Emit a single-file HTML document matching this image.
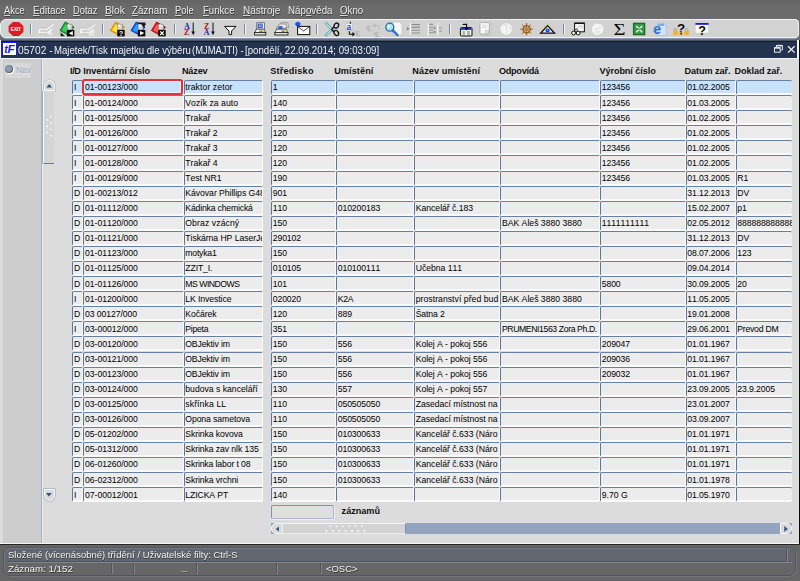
<!DOCTYPE html><html><head><meta charset="utf-8"><title>05702</title><style>
html,body{margin:0;padding:0;}
body{width:800px;height:581px;overflow:hidden;position:relative;background:#6a6a6a;font-family:"Liberation Sans",sans-serif;font-kerning:none;font-variant-ligatures:none;}
.a{position:absolute;}
.menu{left:0;top:0;width:800px;height:40px;background:linear-gradient(#646464,#6b6b6b 8px,#6b6b6b);}
.menu span{position:absolute;top:4.7px;line-height:11px;font-size:10px;color:#ececec;white-space:nowrap;text-shadow:0.5px 0.7px 0.6px #333;}
.menu u{text-decoration:underline;text-decoration-thickness:0.9px;text-underline-offset:1px;text-decoration-color:#d8d8d8;}
.tb{left:0.2px;top:18.7px;width:798.4px;height:19.8px;background:#d2d2d2;border-radius:6.5px 4.6px 4.6px 6.5px;box-shadow:inset 0 0 0 1px #f1f1f1, 0 1.4px 0 #8494ac;}
.sep{position:absolute;top:24px;width:1px;height:10px;background:#7487aa;box-shadow:1px 0 0 #f4f4f4;margin-left:-0.4px;}
.title{left:1.2px;top:40.6px;width:796.2px;height:17px;background:#22324f;box-shadow:0 -1.2px 0 #465466, inset 0 1px 0 #141c2a;}
.title .t{position:absolute;left:17.9px;top:4.5px;line-height:11px;font-size:10.8px;color:#eef0f4;white-space:nowrap;}
.logo{position:absolute;left:0.7px;top:1.4px;width:12.7px;height:12.3px;background:#fbfbff;border:1.2px solid #1c1ce8;}
.main{left:0;top:57.5px;width:798.5px;height:486.7px;background:#dcdcdc;}
.left{left:2.5px;top:59px;width:38.5px;height:483.5px;background:#cdcdcd;border-right:1px solid #a3b3cd;box-shadow:1px 0 0 #ececec;}
.f{position:absolute;box-sizing:border-box;border-radius:1.8px;height:15.08px;background:#ececec;border-style:solid;border-width:1px 1.9px 2px 1.1px;border-color:#66819f #fafafa #fafafa #5a769e;font-size:8.66px;line-height:12.8px;padding-left:0.7px;padding-top:0.45px;white-space:nowrap;overflow:hidden;color:#000;}
.f.s{background:#c9e2fb;}
.h{position:absolute;top:65.6px;font-size:9.1px;font-weight:bold;color:#101010;white-space:nowrap;line-height:10px;}

.nav{left:5.3px;top:63px;width:25.8px;height:14.6px;background:#d8d8d8;}
.nav i{position:absolute;left:-0.2px;top:2.3px;width:7.8px;height:7.8px;border-radius:50%;background:radial-gradient(circle at 45% 45%,#8fa0b8 0,#8a9ab2 45%,#5a6472 62%,#555 70%);box-shadow:0.8px 0.8px 0 0.4px #fafafa;}
.nav b{position:absolute;left:10.6px;top:2.3px;font-weight:normal;font-size:8.6px;line-height:10px;color:#93a8c6;text-shadow:0.6px 0.6px 0 #ececec;}
.vup{left:43.8px;top:79.6px;width:10.9px;height:11px;box-sizing:border-box;background:#d9d9d9;border:1px solid #fafafa;border-radius:5.3px 5.3px 0 0;box-shadow:0 0 0 0.6px #aab4c6;}
.vdn{left:43.5px;top:489.4px;width:11.2px;height:12px;box-sizing:border-box;background:#d9d9d9;border:1px solid #fafafa;border-radius:0 0 5.6px 5.6px;box-shadow:0 0 0 0.7px #a4aec0;}
.vth{left:43.2px;top:91.4px;width:10.8px;height:72.6px;box-sizing:border-box;background:#d5d5d5;border-left:1.2px solid #f6f6f6;border-bottom:1px solid #5f7ba6;box-shadow:-0.8px 0 0 #8fa3c2;}
.hsb{left:271px;top:523.2px;width:521px;height:11.2px;background:#94a4bf;}
.hl{left:271px;top:523.2px;width:11.8px;height:11.2px;box-sizing:border-box;background:#dadada;border:1px solid #f4f4f4;border-radius:5px 0 0 5px;}
.hr{left:779.8px;top:523.2px;width:12px;height:11.2px;box-sizing:border-box;background:#dadada;border:1px solid #f4f4f4;border-radius:0 5px 5px 0;}
.hth{left:282.8px;top:523.2px;width:123.6px;height:11.2px;box-sizing:border-box;background:#d3d3d3;border-top:1.2px solid #f4f4f4;border-bottom:0.8px solid #ececec;border-right:1px solid #7f92b2;}
.cnt{left:271px;top:505px;width:63px;height:14.4px;background:#dfdfdf;border-width:1px;border-color:#7e94b6 #a9b8d0 #a9b8d0 #7e94b6;border-radius:2px;box-shadow:0.8px 0.8px 0 #f4f4f4;}
.zl{left:341.6px;top:506.4px;font-size:9.1px;font-weight:bold;line-height:10px;color:#101010;}
.st{position:absolute;left:8px;font-size:9.7px;color:#f2f2f2;white-space:nowrap;line-height:11px;text-shadow:0.5px 0.6px 0.5px #333;}
.so{left:2.5px;top:546.6px;width:793.5px;height:29.6px;box-sizing:border-box;border:1px solid #4e5666;border-radius:7px;box-shadow:inset 0.7px 0.7px 0 #7c8088, 0.6px 0.6px 0 #80848c;}
.sl{position:absolute;background:#4b5568;box-shadow:0.8px 0.8px 0 #8a8d92;}
.status{left:0;top:544px;width:800px;height:37px;background:#666666;}
</style></head><body>
<div class="a menu"><span style="left:3.90px;font-size:10.00px;transform:scaleX(0.9332);transform-origin:0 0;"><u>A</u>kce</span><span style="left:32.50px;font-size:10.00px;transform:scaleX(0.9830);transform-origin:0 0;"><u>E</u>ditace</span><span style="left:73.25px;font-size:10.00px;transform:scaleX(0.9379);transform-origin:0 0;"><u>D</u>otaz</span><span style="left:104.50px;font-size:10.00px;transform:scaleX(1.0186);transform-origin:0 0;"><u>B</u>lok</span><span style="left:132.00px;font-size:10.00px;transform:scaleX(0.9767);transform-origin:0 0;"><u>Z</u>áznam</span><span style="left:175.25px;font-size:10.00px;transform:scaleX(0.9368);transform-origin:0 0;"><u>P</u>ole</span><span style="left:203.25px;font-size:10.00px;transform:scaleX(0.9611);transform-origin:0 0;"><u>F</u>unkce</span><span style="left:242.50px;font-size:10.00px;transform:scaleX(1.0017);transform-origin:0 0;"><u>N</u>ástroje</span><span style="left:287.50px;font-size:10.00px;transform:scaleX(0.9768);transform-origin:0 0;">Náp<u>o</u>věda</span><span style="left:340.00px;font-size:10.00px;transform:scaleX(0.9740);transform-origin:0 0;"><u>O</u>kno</span></div>
<div class="a tb"></div>
<div class="sep" style="left:30.5px"></div>
<div class="sep" style="left:102px"></div>
<div class="sep" style="left:174px"></div>
<div class="sep" style="left:244.5px"></div>
<div class="sep" style="left:316px"></div>
<div class="sep" style="left:449px"></div>
<div class="sep" style="left:563px"></div>
<svg class="a" style="left:0;top:0" width="800" height="60" viewBox="0 0 800 60" font-family="Liberation Sans, sans-serif"><polygon points="23.39,31.88 19.06,36.02 12.94,36.02 8.61,31.88 8.61,26.02 12.94,21.88 19.06,21.88 23.39,26.02" fill="#dc1b25"/><text x="10.8" y="31" font-size="5.7" font-weight="bold" fill="#fff" textLength="10.4" lengthAdjust="spacingAndGlyphs">EXIT</text><g fill="none" stroke="#f8f8f8" stroke-width="1.6"><path d="M39.5 29 L47.0 29 L52.5 25 L53.5 24.6 M39.5 29 L39.5 33 L48.0 33 L52.0 29.4"/></g><g fill="none" stroke="#b8bcc2" stroke-width="0.8"><path d="M39.5 28 L46.6 28.2 L52.5 24 M39.6 33.8 L47.4 33.8"/></g><path d="M50.5 31 L50.5 36 M48.0 33.5 L53.0 33.5" stroke="#f4f4f4" stroke-width="1.2"/><path d="M51.3 31 L51.3 36" stroke="#c4c8cc" stroke-width="0.5"/><polygon points="65.2,22 74.0,27 68.2,35 60.0,30.5" fill="#1fa53c" stroke="#0c6a22" stroke-width="0.9" stroke-linejoin="round"/><polygon points="65.4,24.2 69.2,27 66.0,32.6 61.8,30.2" fill="#38d058"/><rect x="67.2" y="24.2" width="4.8" height="5.8" fill="#d8d8d8" stroke="#8c8c8c" stroke-width="0.6"/><rect x="67.8" y="24.6" width="2" height="2" fill="#f8f8f8"/><rect x="66.9" y="29.9" width="7.4" height="6.5" fill="#0a0a0a"/><path d="M72.8 31 L72.8 35.4 L68.8 33.2 Z" fill="#fff"/><path d="M60.6 36.2 L60.6 32.2 L65 36.2 Z" fill="#222"/><g fill="none" stroke="#f8f8f8" stroke-width="1.6"><path d="M81.0 29 L88.5 29 L94.0 25 L95.0 24.6 M81.0 29 L81.0 33 L89.5 33 L93.5 29.4"/></g><g fill="none" stroke="#b8bcc2" stroke-width="0.8"><path d="M81.0 28 L88.1 28.2 L94.0 24 M81.1 33.8 L88.9 33.8"/></g><path d="M89.5 31 L94.5 36 M94.5 31 L89.5 36" stroke="#f4f4f4" stroke-width="1.2"/><path d="M90.1 31.6 L95.1 36.4" stroke="#c4c8cc" stroke-width="0.5"/><polygon points="115.6,22 124.4,27 118.6,35 110.4,30.5" fill="#f4a810" stroke="#c88408" stroke-width="0.9" stroke-linejoin="round"/><polygon points="115.8,24.2 119.6,27 116.4,32.6 112.2,30.2" fill="#ffe628"/><rect x="117.6" y="24.2" width="4.8" height="5.8" fill="#d8d8d8" stroke="#8c8c8c" stroke-width="0.6"/><rect x="118.2" y="24.6" width="2" height="2" fill="#f8f8f8"/><rect x="117.3" y="29.9" width="7.4" height="6.5" fill="#0a0a0a"/><text x="119.0" y="36" font-size="6.8" font-weight="bold" fill="#fff">?</text><polygon points="136.2,22 145.0,27 139.2,35 131.0,30.5" fill="#1560e6" stroke="#0a30b0" stroke-width="0.9" stroke-linejoin="round"/><polygon points="136.4,24.2 140.2,27 137.0,32.6 132.8,30.2" fill="#28a0ff"/><rect x="138.2" y="24.2" width="4.8" height="5.8" fill="#d8d8d8" stroke="#8c8c8c" stroke-width="0.6"/><rect x="138.8" y="24.6" width="2" height="2" fill="#f8f8f8"/><rect x="137.9" y="29.9" width="7.4" height="6.5" fill="#0a0a0a"/><path d="M140.0 30.9 L140.0 35.3 L144.4 33.1 Z" fill="#fff"/><path d="M138 22.4 H145.4 V24 H138 Z M141.2 24 L146 24 L143.6 27.6 Z" fill="#181818"/><polygon points="156.6,22 165.4,27 159.6,35 151.4,30.5" fill="#dc1c24" stroke="#980c12" stroke-width="0.9" stroke-linejoin="round"/><polygon points="156.8,24.2 160.6,27 157.4,32.6 153.2,30.2" fill="#ff5a50"/><rect x="158.6" y="24.2" width="4.8" height="5.8" fill="#d8d8d8" stroke="#8c8c8c" stroke-width="0.6"/><rect x="159.2" y="24.6" width="2" height="2" fill="#f8f8f8"/><rect x="158.3" y="29.9" width="7.4" height="6.5" fill="#0a0a0a"/><path d="M160.2 31.4 L163.8 35 M163.8 31.4 L160.2 35" stroke="#fff" stroke-width="1.2"/><text x="184.3" y="28.6" font-family="Liberation Serif, serif" font-weight="bold" font-size="7.8" fill="#1c1ca0">A</text><text x="184.0" y="34.8" font-family="Liberation Serif, serif" font-weight="bold" font-size="7.8" fill="#a01020">Z</text><path d="M193.2 22.6 L193.2 32" stroke="#111" stroke-width="1"/><path d="M191.4 31.4 L195.0 31.4 L193.2 35.2 Z" fill="#111"/><text x="204.1" y="28.6" font-family="Liberation Serif, serif" font-weight="bold" font-size="7.8" fill="#a01020">Z</text><text x="203.8" y="34.8" font-family="Liberation Serif, serif" font-weight="bold" font-size="7.8" fill="#1c1ca0">A</text><path d="M213.0 22.6 L213.0 32" stroke="#111" stroke-width="1"/><path d="M211.2 31.4 L214.8 31.4 L213.0 35.2 Z" fill="#111"/><path d="M224.6 26.4 L236 26.4 L231.6 31 L231.6 34.6 L229 34.6 L229 31 Z" fill="#fafafa" stroke="#111" stroke-width="1"/><rect x="256.8" y="22.8" width="7.6" height="6.4" fill="#f4f4f8" stroke="#333" stroke-width="0.6"/><rect x="257.6" y="23.6" width="5.2" height="4.6" fill="#3c5cc8"/><path d="M258.8 25 h3 M258.8 26.6 h3" stroke="#dfe6ff" stroke-width="0.6"/><path d="M254.8 33 L256.2 29.2 L264.2 29.2 L265.6 33 Z" fill="#f2f2f2" stroke="#222" stroke-width="0.7"/><rect x="254.6" y="32.4" width="11.2" height="2.6" fill="#e0e0e0" stroke="#111" stroke-width="0.8"/><rect x="259.2" y="30.6" width="1.6" height="1.2" fill="#20a030"/><rect x="260.8" y="30.6" width="1.6" height="1.2" fill="#e02020"/><rect x="262.4" y="30.6" width="1.6" height="1.2" fill="#e8c020"/><path d="M277.4 27.6 L281.4 22.6 L287.8 22.6 L288.8 27.6 Z" fill="#d8d8d8" stroke="#777" stroke-width="0.6"/><path d="M276.4 28 L279.4 24 L285.8 24 L286.8 28 Z" fill="#ececec" stroke="#666" stroke-width="0.6"/><rect x="278.4" y="26" width="4" height="3" fill="#4466cc"/><path d="M275.0 33 L276.4 29.2 L286.4 29.2 L287.8 33 Z" fill="#f2f2f2" stroke="#222" stroke-width="0.7"/><rect x="274.8" y="32.4" width="13.2" height="2.6" fill="#e0e0e0" stroke="#111" stroke-width="0.8"/><rect x="281.4" y="30.6" width="1.6" height="1.2" fill="#20a030"/><rect x="283.0" y="30.6" width="1.6" height="1.2" fill="#e02020"/><rect x="284.6" y="30.6" width="1.6" height="1.2" fill="#e8c020"/><rect x="297.6" y="26.4" width="12.2" height="8.2" fill="#fbfbfb" stroke="#111" stroke-width="1"/><path d="M297.8 26.6 L303.7 31 L309.6 26.6" fill="none" stroke="#111" stroke-width="0.8"/><path d="M295 24 L300.6 24 M297.8 21.8 L297.8 26.4 M296 22.4 L299.6 25.8 M299.6 22.4 L296 25.8" stroke="#1a50e0" stroke-width="1.3"/><path d="M325.2 22.4 L332.8 30.2 M325.2 35.8 L332.8 28.6" stroke="#3e8e96" stroke-width="2.4" fill="none"/><path d="M325.4 22.6 L332.6 30 M325.4 35.6 L332.6 28.8" stroke="#c8f0f0" stroke-width="1.2" fill="none"/><path d="M331.4 29.4 L334.2 26.8 M331.4 29.4 L334.2 32" stroke="#111" stroke-width="1.4"/><ellipse cx="336.3" cy="25.6" rx="2.1" ry="2.7" fill="none" stroke="#111" stroke-width="1.3" transform="rotate(35 336.3 25.6)"/><ellipse cx="336.3" cy="33" rx="2.1" ry="2.7" fill="none" stroke="#111" stroke-width="1.3" transform="rotate(-35 336.3 33)"/><rect x="346" y="23.8" width="6" height="7" fill="#fafaff" stroke="#b4b4c4" stroke-width="0.6"/><text x="346.5" y="30.2" font-size="8.2" font-weight="bold" fill="#2030e0">a</text><path d="M350.4 21.8 L350.4 23.6 M349.4 31.2 L349.4 34.2 L353 34.2" stroke="#111" stroke-width="1.1" fill="none"/><path d="M352.4 32 L355.4 34.2 L352.4 36.4 Z" fill="#111"/><text x="354.4" y="36.4" font-size="9.2" font-weight="bold" fill="#fcfcfc" stroke="#a0a0a0" stroke-width="0.5">a</text><text x="365.8" y="30.8" font-size="9.6" font-weight="bold" fill="#fcfcfc" stroke="#a4a4a4" stroke-width="0.5">a</text><text x="373.8" y="36.6" font-size="9.6" font-weight="bold" fill="#fcfcfc" stroke="#a4a4a4" stroke-width="0.5">a</text><path d="M373.6 25.4 L378.8 25.4 L378.8 29.6" stroke="#bcbcbc" stroke-width="1" fill="none"/><path d="M375.4 23.2 L372.2 25.4 L375.4 27.6 Z" fill="#b8b8b8"/><path d="M393 22 H399.6 L402 24.4 V35 H393 Z" fill="#f6f6f6" stroke="#b8b8b8" stroke-width="0.6"/><circle cx="389.8" cy="27.2" r="4" fill="#a8e4f4" stroke="#2a6c94" stroke-width="1.3"/><circle cx="388.8" cy="26.2" r="1.5" fill="#eafaff"/><path d="M392.8 30.4 L397.4 35" stroke="#1458c8" stroke-width="2.4" stroke-linecap="round"/><path d="M393.2 30.6 L397.4 34.8" stroke="#58a8f0" stroke-width="0.8" stroke-linecap="round"/><g stroke="#909090" stroke-width="1.1"><path d="M411.6 24.6 H420 M411.6 27.4 H420 M411.6 30.2 H420 M411.6 33 H420"/></g><path d="M410.4 23 V35" stroke="#f6f6f6" stroke-width="1.2"/><path d="M406.8 27 L409.8 28.8 L406.8 30.6 Z" fill="#888"/><g stroke="#949494" stroke-width="1.1"><path d="M429 24.4 H433 M429 27.2 H433 M429 30 H433 M429 32.8 H433 M439 28 H442 M439 31 H442"/></g><path d="M428.2 23 V35.4 M437.8 23 V35.4" stroke="#f6f6f6" stroke-width="1.2"/><path d="M433.6 26.4 L436.4 28 L433.6 29.6 Z M433.6 30.4 L436.4 32 L433.6 33.6 Z" fill="#8c8c8c"/><rect x="460.4" y="27.6" width="11.6" height="8.4" rx="1" fill="#f2f2f2" stroke="#111" stroke-width="1"/><rect x="461" y="28" width="10.4" height="2" fill="#2040d8"/><path d="M462.4 32 h2.6 M462.4 34 h2.6 M467 32 h3 M467 34 h3" stroke="#555" stroke-width="0.8"/><path d="M460 23.4 H465" stroke="#f0e8c0" stroke-width="1.6"/><path d="M458.6 22 H469" stroke="#a8d0f0" stroke-width="0.7"/><path d="M462.6 24.4 H466.6 V28" stroke="#111" stroke-width="1.1" fill="none"/><path d="M464.4 27.4 L468.8 27.4 L466.6 30.6 Z" fill="#111"/><rect x="481.6" y="23.8" width="9.6" height="11.4" fill="#d4d4d4" stroke="#bcbcbc" stroke-width="0.5"/><rect x="480" y="22.6" width="9.4" height="11.4" rx="0.8" fill="#f8f8f8" stroke="#9c9c9c" stroke-width="0.7"/><path d="M482 25.4 h5.4 M482 27.4 h5.4" stroke="#cfcfcf" stroke-width="0.7"/><rect x="485.4" y="30.6" width="3.4" height="3" fill="#e0e0e0" stroke="#b0b0b0" stroke-width="0.5"/><circle cx="506.2" cy="29" r="6.2" fill="#f4f4f4" stroke="#c4c4c4" stroke-width="0.6"/><path d="M503 25.6 q2 -1.4 4 -0.4 q0.6 1.6 -1 2.4 q-0.4 1.8 1.4 3 q-0.4 2 -1.8 3 M509 26.6 q1.6 1.2 1.4 3.4" fill="none" stroke="#cfcfcf" stroke-width="0.8"/><g stroke="#a25a14" fill="none"><circle cx="526.6" cy="29.2" r="3.6" stroke-width="1.3"/><path d="M520.4 29.2 H532.8 M526.6 23 V35.4 M522.2 24.8 L531 33.6 M531 24.8 L522.2 33.6" stroke-width="1"/></g><circle cx="526.6" cy="29.2" r="1.3" fill="#c88a3a"/><path d="M541.4 28.4 L543 29.4 M544 25.2 L545.2 26.6 M547.6 23.6 L547.6 25.2 M551 25.2 L549.8 26.6 M553.8 28.4 L552.2 29.4" stroke="#f0d020" stroke-width="1"/><path d="M540.6 33.2 L547.6 25.6 L554.6 33.2 Z" fill="#e8e8e8" stroke="#111" stroke-width="1.3" stroke-linejoin="miter"/><circle cx="547.6" cy="30.4" r="2" fill="#1040f0"/><circle cx="547.6" cy="30.2" r="0.8" fill="#30c8ff"/><rect x="574.6" y="23" width="9.8" height="8.8" fill="#f4f4f4" stroke="#111" stroke-width="1"/><path d="M575 23.4 h9" stroke="#111" stroke-width="1.2"/><path d="M577 29 L579.6 25.6 L581 27.6 L583.4 24.8" stroke="#b8b8b8" stroke-width="0.7" fill="none"/><circle cx="573.6" cy="33" r="1.9" fill="#f8f8f8" stroke="#111" stroke-width="1"/><circle cx="578.2" cy="33" r="1.9" fill="#f8f8f8" stroke="#111" stroke-width="1"/><path d="M574.4 30.8 L576.6 28.6 M577.4 30.8 L576.8 28.8" stroke="#111" stroke-width="0.9"/><circle cx="597.6" cy="29.2" r="6.2" fill="#f4f4f4" stroke="#c8c8c8" stroke-width="0.6"/><path d="M594.6 29 L597.6 29.6 L600.6 26.6" stroke="#d0d0d0" stroke-width="0.8" fill="none"/><path d="M595 32 h5" stroke="#d4d4d4" stroke-width="0.8"/><text x="613.4" y="35.4" font-family="Liberation Serif, serif" font-size="16" fill="#0a0a0a" textLength="12" lengthAdjust="spacingAndGlyphs">Σ</text><rect x="633.6" y="23.4" width="11" height="11.2" fill="#3c9a4c" stroke="#176f27" stroke-width="1.4"/><path d="M636.2 26 L642.2 32.2 M642.2 26 L636.2 32.2" stroke="#dff2df" stroke-width="1.5"/><path d="M636.4 29.1 h5.6" stroke="#1a7a2a" stroke-width="0.9"/><path d="M657.6 23.4 H664 L666.4 25.8 V35.8 H657.6 Z" fill="#d4e2f8" stroke="#9ab0d8" stroke-width="0.6"/><rect x="658" y="23.8" width="6" height="2.2" fill="#8cb8f0"/><text x="653.2" y="34.4" font-size="14" font-weight="bold" fill="#1f6ad8">e</text><path d="M653.6 31.4 q3.6 -7.6 10.6 -6.4" stroke="#5aa4f4" stroke-width="1" fill="none"/><text x="677" y="32.8" font-size="13.4" font-weight="bold" fill="#0a0a0a">?</text><rect x="673.2" y="30.6" width="4.4" height="4.6" fill="#f0b030"/><rect x="684.4" y="30.6" width="4.4" height="4.6" fill="#f0b030"/><rect x="678.6" y="32" width="4.8" height="3.4" fill="#e8c060"/><path d="M674.2 30.6 v-1.4 q1.2 -1.4 2.4 0 v1.4 M685.4 30.6 v-1.4 q1.2 -1.4 2.4 0 v1.4" stroke="#888" stroke-width="0.7" fill="none"/><rect x="680.4" y="32.6" width="1.4" height="1.8" fill="#111"/><rect x="695.4" y="23.4" width="13.2" height="9.6" fill="#fafafa" stroke="#c8c8c8" stroke-width="0.5"/><rect x="695.4" y="23" width="13.2" height="1.8" fill="#1818e0"/><text x="698.2" y="35.4" font-size="12.6" font-weight="bold" fill="#0a0a0a">?</text></svg>
<div class="a" style="left:0;top:39.6px;width:800px;height:505.8px;background:#0c0c0c"></div><div class="a" style="left:0;top:40px;width:798.9px;height:505px;background:#f2f2f2"></div>
<div class="a title"><div class="logo"><svg width="13" height="13" viewBox="0 0 13 13" style="position:absolute;left:0;top:0"><text x="1.2" y="10" font-family="Liberation Sans, sans-serif" font-style="italic" font-weight="bold" font-size="10.5" fill="#1a1ae0">t</text><text x="4.4" y="10.4" font-family="Liberation Sans, sans-serif" font-style="italic" font-weight="bold" font-size="11.5" fill="#1a1ae0">F</text></svg></div><div class="t" style="left:16.95px;font-size:10.80px;transform:scaleX(0.9437);transform-origin:0 0;">05702 -</div><div class="t" style="left:52.60px;font-size:10.80px;transform:scaleX(0.8879);transform-origin:0 0;">Majetek/Tisk majetku dle výběru</div><div class="t" style="left:191.30px;font-size:10.80px;transform:scaleX(0.8698);transform-origin:0 0;">(MJMAJTI) -</div><div class="t" style="left:244.20px;font-size:10.80px;transform:scaleX(0.8973);transform-origin:0 0;">[pondělí, 22.09.2014; 09:03:09]</div></div>
<div class="a main"></div><div class="a" style="left:0;top:57.6px;width:798.5px;height:1.4px;background:#f8f8f8"></div><div class="a left"></div>
<div class="h" style="left:70.05px;font-size:9.15px;letter-spacing:-0.434px;">I/D</div>
<div class="h" style="left:83.20px;font-size:9.15px;letter-spacing:-0.003px;">Inventární číslo</div>
<div class="h" style="left:181.95px;font-size:9.15px;letter-spacing:-0.156px;">Název</div>
<div class="h" style="left:270.15px;font-size:9.15px;letter-spacing:0.216px;">Středisko</div>
<div class="h" style="left:334.15px;font-size:9.15px;letter-spacing:0.097px;">Umístění</div>
<div class="h" style="left:412.35px;font-size:9.15px;letter-spacing:0.093px;">Název umístění</div>
<div class="h" style="left:498.95px;font-size:9.15px;letter-spacing:-0.281px;">Odpovídá</div>
<div class="h" style="left:599.45px;font-size:9.15px;letter-spacing:-0.086px;">Výrobní číslo</div>
<div class="h" style="left:684.45px;font-size:9.15px;letter-spacing:-0.062px;">Datum zař.</div>
<div class="h" style="left:734.55px;font-size:9.15px;letter-spacing:-0.099px;">Doklad zař.</div>
<div class="f s" style="left:72.4px;top:80.06px;width:11.0px;font-size:8.66px;letter-spacing:-0.044px;padding-left:0.5px;">I</div>
<div class="f s" style="left:83.4px;top:80.06px;width:100.2px;font-size:8.66px;letter-spacing:-0.059px;">01-00123/000</div>
<div class="f s" style="left:183.6px;top:80.06px;width:79.0px;font-size:8.66px;letter-spacing:0.080px;">traktor zetor</div>
<div class="f s" style="left:271px;top:80.06px;width:65.0px;font-size:8.66px;letter-spacing:-0.093px;">1</div>
<div class="f s" style="left:336px;top:80.06px;width:78.0px;"></div>
<div class="f s" style="left:414px;top:80.06px;width:86.2px;"></div>
<div class="f s" style="left:500.2px;top:80.06px;width:99.8px;"></div>
<div class="f s" style="left:600px;top:80.06px;width:85.6px;font-size:8.66px;letter-spacing:-0.093px;">123456</div>
<div class="f s" style="left:685.6px;top:80.06px;width:50.0px;font-size:8.66px;letter-spacing:-0.083px;">01.02.2005</div>
<div class="f s" style="left:735.6px;top:80.06px;width:56.7px;border-right:none;"></div>
<div class="f" style="left:72.4px;top:95.14px;width:11.0px;font-size:8.66px;letter-spacing:-0.044px;padding-left:0.5px;">I</div>
<div class="f" style="left:83.4px;top:95.14px;width:100.2px;font-size:8.66px;letter-spacing:-0.059px;">01-00124/000</div>
<div class="f" style="left:183.6px;top:95.14px;width:79.0px;font-size:8.66px;letter-spacing:0.021px;">Vozík za auto</div>
<div class="f" style="left:271px;top:95.14px;width:65.0px;font-size:8.66px;letter-spacing:-0.093px;">140</div>
<div class="f" style="left:336px;top:95.14px;width:78.0px;"></div>
<div class="f" style="left:414px;top:95.14px;width:86.2px;"></div>
<div class="f" style="left:500.2px;top:95.14px;width:99.8px;"></div>
<div class="f" style="left:600px;top:95.14px;width:85.6px;font-size:8.66px;letter-spacing:-0.093px;">123456</div>
<div class="f" style="left:685.6px;top:95.14px;width:50.0px;font-size:8.66px;letter-spacing:-0.083px;">01.03.2005</div>
<div class="f" style="left:735.6px;top:95.14px;width:56.7px;border-right:none;"></div>
<div class="f" style="left:72.4px;top:110.22px;width:11.0px;font-size:8.66px;letter-spacing:-0.044px;padding-left:0.5px;">I</div>
<div class="f" style="left:83.4px;top:110.22px;width:100.2px;font-size:8.66px;letter-spacing:-0.059px;">01-00125/000</div>
<div class="f" style="left:183.6px;top:110.22px;width:79.0px;font-size:8.66px;letter-spacing:0.043px;">Trakař</div>
<div class="f" style="left:271px;top:110.22px;width:65.0px;font-size:8.66px;letter-spacing:-0.093px;">120</div>
<div class="f" style="left:336px;top:110.22px;width:78.0px;"></div>
<div class="f" style="left:414px;top:110.22px;width:86.2px;"></div>
<div class="f" style="left:500.2px;top:110.22px;width:99.8px;"></div>
<div class="f" style="left:600px;top:110.22px;width:85.6px;font-size:8.66px;letter-spacing:-0.093px;">123456</div>
<div class="f" style="left:685.6px;top:110.22px;width:50.0px;font-size:8.66px;letter-spacing:-0.083px;">01.02.2005</div>
<div class="f" style="left:735.6px;top:110.22px;width:56.7px;border-right:none;"></div>
<div class="f" style="left:72.4px;top:125.30px;width:11.0px;font-size:8.66px;letter-spacing:-0.044px;padding-left:0.5px;">I</div>
<div class="f" style="left:83.4px;top:125.30px;width:100.2px;font-size:8.66px;letter-spacing:-0.059px;">01-00126/000</div>
<div class="f" style="left:183.6px;top:125.30px;width:79.0px;font-size:8.66px;letter-spacing:0.015px;">Trakař 2</div>
<div class="f" style="left:271px;top:125.30px;width:65.0px;font-size:8.66px;letter-spacing:-0.093px;">120</div>
<div class="f" style="left:336px;top:125.30px;width:78.0px;"></div>
<div class="f" style="left:414px;top:125.30px;width:86.2px;"></div>
<div class="f" style="left:500.2px;top:125.30px;width:99.8px;"></div>
<div class="f" style="left:600px;top:125.30px;width:85.6px;font-size:8.66px;letter-spacing:-0.093px;">123456</div>
<div class="f" style="left:685.6px;top:125.30px;width:50.0px;font-size:8.66px;letter-spacing:-0.083px;">01.02.2005</div>
<div class="f" style="left:735.6px;top:125.30px;width:56.7px;border-right:none;"></div>
<div class="f" style="left:72.4px;top:140.38px;width:11.0px;font-size:8.66px;letter-spacing:-0.044px;padding-left:0.5px;">I</div>
<div class="f" style="left:83.4px;top:140.38px;width:100.2px;font-size:8.66px;letter-spacing:-0.059px;">01-00127/000</div>
<div class="f" style="left:183.6px;top:140.38px;width:79.0px;font-size:8.66px;letter-spacing:0.015px;">Trakař 3</div>
<div class="f" style="left:271px;top:140.38px;width:65.0px;font-size:8.66px;letter-spacing:-0.093px;">120</div>
<div class="f" style="left:336px;top:140.38px;width:78.0px;"></div>
<div class="f" style="left:414px;top:140.38px;width:86.2px;"></div>
<div class="f" style="left:500.2px;top:140.38px;width:99.8px;"></div>
<div class="f" style="left:600px;top:140.38px;width:85.6px;font-size:8.66px;letter-spacing:-0.093px;">123456</div>
<div class="f" style="left:685.6px;top:140.38px;width:50.0px;font-size:8.66px;letter-spacing:-0.083px;">01.02.2005</div>
<div class="f" style="left:735.6px;top:140.38px;width:56.7px;border-right:none;"></div>
<div class="f" style="left:72.4px;top:155.46px;width:11.0px;font-size:8.66px;letter-spacing:-0.044px;padding-left:0.5px;">I</div>
<div class="f" style="left:83.4px;top:155.46px;width:100.2px;font-size:8.66px;letter-spacing:-0.059px;">01-00128/000</div>
<div class="f" style="left:183.6px;top:155.46px;width:79.0px;font-size:8.66px;letter-spacing:0.015px;">Trakař 4</div>
<div class="f" style="left:271px;top:155.46px;width:65.0px;font-size:8.66px;letter-spacing:-0.093px;">120</div>
<div class="f" style="left:336px;top:155.46px;width:78.0px;"></div>
<div class="f" style="left:414px;top:155.46px;width:86.2px;"></div>
<div class="f" style="left:500.2px;top:155.46px;width:99.8px;"></div>
<div class="f" style="left:600px;top:155.46px;width:85.6px;font-size:8.66px;letter-spacing:-0.093px;">123456</div>
<div class="f" style="left:685.6px;top:155.46px;width:50.0px;font-size:8.66px;letter-spacing:-0.083px;">01.02.2005</div>
<div class="f" style="left:735.6px;top:155.46px;width:56.7px;border-right:none;"></div>
<div class="f" style="left:72.4px;top:170.54px;width:11.0px;font-size:8.66px;letter-spacing:-0.044px;padding-left:0.5px;">I</div>
<div class="f" style="left:83.4px;top:170.54px;width:100.2px;font-size:8.66px;letter-spacing:-0.059px;">01-00129/000</div>
<div class="f" style="left:183.6px;top:170.54px;width:79.0px;font-size:8.66px;letter-spacing:-0.035px;">Test NR1</div>
<div class="f" style="left:271px;top:170.54px;width:65.0px;font-size:8.66px;letter-spacing:-0.093px;">190</div>
<div class="f" style="left:336px;top:170.54px;width:78.0px;"></div>
<div class="f" style="left:414px;top:170.54px;width:86.2px;"></div>
<div class="f" style="left:500.2px;top:170.54px;width:99.8px;"></div>
<div class="f" style="left:600px;top:170.54px;width:85.6px;font-size:8.66px;letter-spacing:-0.093px;">123456</div>
<div class="f" style="left:685.6px;top:170.54px;width:50.0px;font-size:8.66px;letter-spacing:-0.083px;">01.03.2005</div>
<div class="f" style="left:735.6px;top:170.54px;width:56.7px;font-size:8.66px;letter-spacing:-0.024px;border-right:none;">R1</div>
<div class="f" style="left:72.4px;top:185.62px;width:11.0px;font-size:8.66px;letter-spacing:0.044px;padding-left:0.5px;">D</div>
<div class="f" style="left:83.4px;top:185.62px;width:100.2px;font-size:8.66px;letter-spacing:-0.059px;">01-00213/012</div>
<div class="f" style="left:183.6px;top:185.62px;width:79.0px;font-size:8.66px;letter-spacing:-0.043px;">Kávovar Phillips G48</div>
<div class="f" style="left:271px;top:185.62px;width:65.0px;font-size:8.66px;letter-spacing:-0.093px;">901</div>
<div class="f" style="left:336px;top:185.62px;width:78.0px;"></div>
<div class="f" style="left:414px;top:185.62px;width:86.2px;"></div>
<div class="f" style="left:500.2px;top:185.62px;width:99.8px;"></div>
<div class="f" style="left:600px;top:185.62px;width:85.6px;"></div>
<div class="f" style="left:685.6px;top:185.62px;width:50.0px;font-size:8.66px;letter-spacing:-0.083px;">31.12.2013</div>
<div class="f" style="left:735.6px;top:185.62px;width:56.7px;font-size:8.66px;letter-spacing:-0.110px;border-right:none;">DV</div>
<div class="f" style="left:72.4px;top:200.70px;width:11.0px;font-size:8.66px;letter-spacing:0.044px;padding-left:0.5px;">D</div>
<div class="f" style="left:83.4px;top:200.70px;width:100.2px;font-size:8.66px;letter-spacing:-0.059px;">01-01112/000</div>
<div class="f" style="left:183.6px;top:200.70px;width:79.0px;font-size:8.66px;letter-spacing:-0.176px;">Kádinka chemická</div>
<div class="f" style="left:271px;top:200.70px;width:65.0px;font-size:8.66px;letter-spacing:-0.093px;">110</div>
<div class="f" style="left:336px;top:200.70px;width:78.0px;font-size:8.66px;letter-spacing:-0.093px;">010200183</div>
<div class="f" style="left:414px;top:200.70px;width:86.2px;font-size:8.66px;letter-spacing:-0.021px;">Kancelář č.183</div>
<div class="f" style="left:500.2px;top:200.70px;width:99.8px;"></div>
<div class="f" style="left:600px;top:200.70px;width:85.6px;"></div>
<div class="f" style="left:685.6px;top:200.70px;width:50.0px;font-size:8.66px;letter-spacing:-0.083px;">15.02.2007</div>
<div class="f" style="left:735.6px;top:200.70px;width:56.7px;font-size:8.66px;letter-spacing:-0.093px;border-right:none;">p1</div>
<div class="f" style="left:72.4px;top:215.78px;width:11.0px;font-size:8.66px;letter-spacing:0.044px;padding-left:0.5px;">D</div>
<div class="f" style="left:83.4px;top:215.78px;width:100.2px;font-size:8.66px;letter-spacing:-0.059px;">01-01120/000</div>
<div class="f" style="left:183.6px;top:215.78px;width:79.0px;font-size:8.66px;letter-spacing:0.089px;">Obraz vzácný</div>
<div class="f" style="left:271px;top:215.78px;width:65.0px;font-size:8.66px;letter-spacing:-0.093px;">150</div>
<div class="f" style="left:336px;top:215.78px;width:78.0px;"></div>
<div class="f" style="left:414px;top:215.78px;width:86.2px;"></div>
<div class="f" style="left:500.2px;top:215.78px;width:99.8px;font-size:8.66px;letter-spacing:0.003px;">BAK Aleš 3880 3880</div>
<div class="f" style="left:600px;top:215.78px;width:85.6px;font-size:8.66px;letter-spacing:-0.093px;">1111111111</div>
<div class="f" style="left:685.6px;top:215.78px;width:50.0px;font-size:8.66px;letter-spacing:-0.083px;">02.05.2012</div>
<div class="f" style="left:735.6px;top:215.78px;width:56.7px;font-size:8.66px;letter-spacing:-0.093px;border-right:none;">888888888888</div>
<div class="f" style="left:72.4px;top:230.86px;width:11.0px;font-size:8.66px;letter-spacing:0.044px;padding-left:0.5px;">D</div>
<div class="f" style="left:83.4px;top:230.86px;width:100.2px;font-size:8.66px;letter-spacing:-0.059px;">01-01121/000</div>
<div class="f" style="left:183.6px;top:230.86px;width:79.0px;font-size:8.66px;letter-spacing:-0.052px;">Tiskárna HP LaserJe</div>
<div class="f" style="left:271px;top:230.86px;width:65.0px;font-size:8.66px;letter-spacing:-0.093px;">290102</div>
<div class="f" style="left:336px;top:230.86px;width:78.0px;"></div>
<div class="f" style="left:414px;top:230.86px;width:86.2px;"></div>
<div class="f" style="left:500.2px;top:230.86px;width:99.8px;"></div>
<div class="f" style="left:600px;top:230.86px;width:85.6px;"></div>
<div class="f" style="left:685.6px;top:230.86px;width:50.0px;font-size:8.66px;letter-spacing:-0.083px;">31.12.2013</div>
<div class="f" style="left:735.6px;top:230.86px;width:56.7px;font-size:8.66px;letter-spacing:-0.110px;border-right:none;">DV</div>
<div class="f" style="left:72.4px;top:245.94px;width:11.0px;font-size:8.66px;letter-spacing:0.044px;padding-left:0.5px;">D</div>
<div class="f" style="left:83.4px;top:245.94px;width:100.2px;font-size:8.66px;letter-spacing:-0.059px;">01-01123/000</div>
<div class="f" style="left:183.6px;top:245.94px;width:79.0px;font-size:8.66px;letter-spacing:-0.209px;">motyka1</div>
<div class="f" style="left:271px;top:245.94px;width:65.0px;font-size:8.66px;letter-spacing:-0.093px;">150</div>
<div class="f" style="left:336px;top:245.94px;width:78.0px;"></div>
<div class="f" style="left:414px;top:245.94px;width:86.2px;"></div>
<div class="f" style="left:500.2px;top:245.94px;width:99.8px;"></div>
<div class="f" style="left:600px;top:245.94px;width:85.6px;"></div>
<div class="f" style="left:685.6px;top:245.94px;width:50.0px;font-size:8.66px;letter-spacing:-0.083px;">08.07.2006</div>
<div class="f" style="left:735.6px;top:245.94px;width:56.7px;font-size:8.66px;letter-spacing:-0.093px;border-right:none;">123</div>
<div class="f" style="left:72.4px;top:261.02px;width:11.0px;font-size:8.66px;letter-spacing:0.044px;padding-left:0.5px;">D</div>
<div class="f" style="left:83.4px;top:261.02px;width:100.2px;font-size:8.66px;letter-spacing:-0.059px;">01-01125/000</div>
<div class="f" style="left:183.6px;top:261.02px;width:79.0px;font-size:8.66px;letter-spacing:-0.109px;">ZZIT_I.</div>
<div class="f" style="left:271px;top:261.02px;width:65.0px;font-size:8.66px;letter-spacing:-0.093px;">010105</div>
<div class="f" style="left:336px;top:261.02px;width:78.0px;font-size:8.66px;letter-spacing:-0.093px;">010100111</div>
<div class="f" style="left:414px;top:261.02px;width:86.2px;font-size:8.66px;letter-spacing:-0.025px;">Učebna 111</div>
<div class="f" style="left:500.2px;top:261.02px;width:99.8px;"></div>
<div class="f" style="left:600px;top:261.02px;width:85.6px;"></div>
<div class="f" style="left:685.6px;top:261.02px;width:50.0px;font-size:8.66px;letter-spacing:-0.083px;">09.04.2014</div>
<div class="f" style="left:735.6px;top:261.02px;width:56.7px;border-right:none;"></div>
<div class="f" style="left:72.4px;top:276.10px;width:11.0px;font-size:8.66px;letter-spacing:0.044px;padding-left:0.5px;">D</div>
<div class="f" style="left:83.4px;top:276.10px;width:100.2px;font-size:8.66px;letter-spacing:-0.059px;">01-01126/000</div>
<div class="f" style="left:183.6px;top:276.10px;width:79.0px;font-size:8.66px;letter-spacing:-0.488px;">MS WINDOWS</div>
<div class="f" style="left:271px;top:276.10px;width:65.0px;font-size:8.66px;letter-spacing:-0.093px;">101</div>
<div class="f" style="left:336px;top:276.10px;width:78.0px;"></div>
<div class="f" style="left:414px;top:276.10px;width:86.2px;"></div>
<div class="f" style="left:500.2px;top:276.10px;width:99.8px;"></div>
<div class="f" style="left:600px;top:276.10px;width:85.6px;font-size:8.66px;letter-spacing:-0.093px;">5800</div>
<div class="f" style="left:685.6px;top:276.10px;width:50.0px;font-size:8.66px;letter-spacing:-0.083px;">30.09.2005</div>
<div class="f" style="left:735.6px;top:276.10px;width:56.7px;font-size:8.66px;letter-spacing:-0.093px;border-right:none;">20</div>
<div class="f" style="left:72.4px;top:291.18px;width:11.0px;font-size:8.66px;letter-spacing:-0.044px;padding-left:0.5px;">I</div>
<div class="f" style="left:83.4px;top:291.18px;width:100.2px;font-size:8.66px;letter-spacing:-0.059px;">01-01200/000</div>
<div class="f" style="left:183.6px;top:291.18px;width:79.0px;font-size:8.66px;letter-spacing:-0.086px;">LK Investice</div>
<div class="f" style="left:271px;top:291.18px;width:65.0px;font-size:8.66px;letter-spacing:-0.093px;">020020</div>
<div class="f" style="left:336px;top:291.18px;width:78.0px;font-size:8.66px;letter-spacing:-0.208px;">K2A</div>
<div class="f" style="left:414px;top:291.18px;width:86.2px;font-size:8.66px;letter-spacing:0.039px;">prostranství před bud</div>
<div class="f" style="left:500.2px;top:291.18px;width:99.8px;font-size:8.66px;letter-spacing:0.003px;">BAK Aleš 3880 3880</div>
<div class="f" style="left:600px;top:291.18px;width:85.6px;"></div>
<div class="f" style="left:685.6px;top:291.18px;width:50.0px;font-size:8.66px;letter-spacing:-0.083px;">11.05.2005</div>
<div class="f" style="left:735.6px;top:291.18px;width:56.7px;border-right:none;"></div>
<div class="f" style="left:72.4px;top:306.26px;width:11.0px;font-size:8.66px;letter-spacing:0.044px;padding-left:0.5px;">D</div>
<div class="f" style="left:83.4px;top:306.26px;width:100.2px;font-size:8.66px;letter-spacing:-0.085px;">03 00127/000</div>
<div class="f" style="left:183.6px;top:306.26px;width:79.0px;font-size:8.66px;letter-spacing:-0.070px;">Kočárek</div>
<div class="f" style="left:271px;top:306.26px;width:65.0px;font-size:8.66px;letter-spacing:-0.093px;">120</div>
<div class="f" style="left:336px;top:306.26px;width:78.0px;font-size:8.66px;letter-spacing:-0.093px;">889</div>
<div class="f" style="left:414px;top:306.26px;width:86.2px;font-size:8.66px;letter-spacing:-0.103px;">Šatna 2</div>
<div class="f" style="left:500.2px;top:306.26px;width:99.8px;"></div>
<div class="f" style="left:600px;top:306.26px;width:85.6px;"></div>
<div class="f" style="left:685.6px;top:306.26px;width:50.0px;font-size:8.66px;letter-spacing:-0.083px;">19.01.2008</div>
<div class="f" style="left:735.6px;top:306.26px;width:56.7px;border-right:none;"></div>
<div class="f" style="left:72.4px;top:321.34px;width:11.0px;font-size:8.66px;letter-spacing:-0.044px;padding-left:0.5px;">I</div>
<div class="f" style="left:83.4px;top:321.34px;width:100.2px;font-size:8.66px;letter-spacing:-0.059px;">03-00012/000</div>
<div class="f" style="left:183.6px;top:321.34px;width:79.0px;font-size:8.66px;letter-spacing:-0.273px;">Pipeta</div>
<div class="f" style="left:271px;top:321.34px;width:65.0px;font-size:8.66px;letter-spacing:-0.093px;">351</div>
<div class="f" style="left:336px;top:321.34px;width:78.0px;"></div>
<div class="f" style="left:414px;top:321.34px;width:86.2px;"></div>
<div class="f" style="left:500.2px;top:321.34px;width:99.8px;font-size:8.66px;letter-spacing:-0.386px;">PRUMENI1563 Zora Ph.D.</div>
<div class="f" style="left:600px;top:321.34px;width:85.6px;"></div>
<div class="f" style="left:685.6px;top:321.34px;width:50.0px;font-size:8.66px;letter-spacing:-0.083px;">29.06.2001</div>
<div class="f" style="left:735.6px;top:321.34px;width:56.7px;font-size:8.66px;letter-spacing:-0.246px;border-right:none;">Prevod DM</div>
<div class="f" style="left:72.4px;top:336.42px;width:11.0px;font-size:8.66px;letter-spacing:0.044px;padding-left:0.5px;">D</div>
<div class="f" style="left:83.4px;top:336.42px;width:100.2px;font-size:8.66px;letter-spacing:-0.059px;">03-00120/000</div>
<div class="f" style="left:183.6px;top:336.42px;width:79.0px;font-size:8.66px;letter-spacing:-0.140px;">OBJektiv im</div>
<div class="f" style="left:271px;top:336.42px;width:65.0px;font-size:8.66px;letter-spacing:-0.093px;">150</div>
<div class="f" style="left:336px;top:336.42px;width:78.0px;font-size:8.66px;letter-spacing:-0.093px;">556</div>
<div class="f" style="left:414px;top:336.42px;width:86.2px;font-size:8.66px;letter-spacing:-0.060px;">Kolej A - pokoj 556</div>
<div class="f" style="left:500.2px;top:336.42px;width:99.8px;"></div>
<div class="f" style="left:600px;top:336.42px;width:85.6px;font-size:8.66px;letter-spacing:-0.093px;">209047</div>
<div class="f" style="left:685.6px;top:336.42px;width:50.0px;font-size:8.66px;letter-spacing:-0.083px;">01.01.1967</div>
<div class="f" style="left:735.6px;top:336.42px;width:56.7px;border-right:none;"></div>
<div class="f" style="left:72.4px;top:351.50px;width:11.0px;font-size:8.66px;letter-spacing:0.044px;padding-left:0.5px;">D</div>
<div class="f" style="left:83.4px;top:351.50px;width:100.2px;font-size:8.66px;letter-spacing:-0.059px;">03-00121/000</div>
<div class="f" style="left:183.6px;top:351.50px;width:79.0px;font-size:8.66px;letter-spacing:-0.140px;">OBJektiv im</div>
<div class="f" style="left:271px;top:351.50px;width:65.0px;font-size:8.66px;letter-spacing:-0.093px;">150</div>
<div class="f" style="left:336px;top:351.50px;width:78.0px;font-size:8.66px;letter-spacing:-0.093px;">556</div>
<div class="f" style="left:414px;top:351.50px;width:86.2px;font-size:8.66px;letter-spacing:-0.060px;">Kolej A - pokoj 556</div>
<div class="f" style="left:500.2px;top:351.50px;width:99.8px;"></div>
<div class="f" style="left:600px;top:351.50px;width:85.6px;font-size:8.66px;letter-spacing:-0.093px;">209036</div>
<div class="f" style="left:685.6px;top:351.50px;width:50.0px;font-size:8.66px;letter-spacing:-0.083px;">01.01.1967</div>
<div class="f" style="left:735.6px;top:351.50px;width:56.7px;border-right:none;"></div>
<div class="f" style="left:72.4px;top:366.58px;width:11.0px;font-size:8.66px;letter-spacing:0.044px;padding-left:0.5px;">D</div>
<div class="f" style="left:83.4px;top:366.58px;width:100.2px;font-size:8.66px;letter-spacing:-0.059px;">03-00123/000</div>
<div class="f" style="left:183.6px;top:366.58px;width:79.0px;font-size:8.66px;letter-spacing:-0.140px;">OBJektiv im</div>
<div class="f" style="left:271px;top:366.58px;width:65.0px;font-size:8.66px;letter-spacing:-0.093px;">150</div>
<div class="f" style="left:336px;top:366.58px;width:78.0px;font-size:8.66px;letter-spacing:-0.093px;">556</div>
<div class="f" style="left:414px;top:366.58px;width:86.2px;font-size:8.66px;letter-spacing:-0.060px;">Kolej A - pokoj 556</div>
<div class="f" style="left:500.2px;top:366.58px;width:99.8px;"></div>
<div class="f" style="left:600px;top:366.58px;width:85.6px;font-size:8.66px;letter-spacing:-0.093px;">209032</div>
<div class="f" style="left:685.6px;top:366.58px;width:50.0px;font-size:8.66px;letter-spacing:-0.083px;">01.01.1967</div>
<div class="f" style="left:735.6px;top:366.58px;width:56.7px;border-right:none;"></div>
<div class="f" style="left:72.4px;top:381.66px;width:11.0px;font-size:8.66px;letter-spacing:0.044px;padding-left:0.5px;">D</div>
<div class="f" style="left:83.4px;top:381.66px;width:100.2px;font-size:8.66px;letter-spacing:-0.059px;">03-00124/000</div>
<div class="f" style="left:183.6px;top:381.66px;width:79.0px;font-size:8.66px;letter-spacing:-0.010px;">budova s kanceláří</div>
<div class="f" style="left:271px;top:381.66px;width:65.0px;font-size:8.66px;letter-spacing:-0.093px;">130</div>
<div class="f" style="left:336px;top:381.66px;width:78.0px;font-size:8.66px;letter-spacing:-0.093px;">557</div>
<div class="f" style="left:414px;top:381.66px;width:86.2px;font-size:8.66px;letter-spacing:-0.060px;">Kolej A - pokoj 557</div>
<div class="f" style="left:500.2px;top:381.66px;width:99.8px;"></div>
<div class="f" style="left:600px;top:381.66px;width:85.6px;"></div>
<div class="f" style="left:685.6px;top:381.66px;width:50.0px;font-size:8.66px;letter-spacing:-0.083px;">23.09.2005</div>
<div class="f" style="left:735.6px;top:381.66px;width:56.7px;font-size:8.66px;letter-spacing:-0.082px;border-right:none;">23.9.2005</div>
<div class="f" style="left:72.4px;top:396.74px;width:11.0px;font-size:8.66px;letter-spacing:0.044px;padding-left:0.5px;">D</div>
<div class="f" style="left:83.4px;top:396.74px;width:100.2px;font-size:8.66px;letter-spacing:-0.059px;">03-00125/000</div>
<div class="f" style="left:183.6px;top:396.74px;width:79.0px;font-size:8.66px;letter-spacing:0.099px;">skřínka LL</div>
<div class="f" style="left:271px;top:396.74px;width:65.0px;font-size:8.66px;letter-spacing:-0.093px;">110</div>
<div class="f" style="left:336px;top:396.74px;width:78.0px;font-size:8.66px;letter-spacing:-0.093px;">050505050</div>
<div class="f" style="left:414px;top:396.74px;width:86.2px;font-size:8.66px;letter-spacing:-0.047px;">Zasedací místnost na</div>
<div class="f" style="left:500.2px;top:396.74px;width:99.8px;"></div>
<div class="f" style="left:600px;top:396.74px;width:85.6px;"></div>
<div class="f" style="left:685.6px;top:396.74px;width:50.0px;font-size:8.66px;letter-spacing:-0.083px;">23.01.2007</div>
<div class="f" style="left:735.6px;top:396.74px;width:56.7px;border-right:none;"></div>
<div class="f" style="left:72.4px;top:411.82px;width:11.0px;font-size:8.66px;letter-spacing:0.044px;padding-left:0.5px;">D</div>
<div class="f" style="left:83.4px;top:411.82px;width:100.2px;font-size:8.66px;letter-spacing:-0.059px;">03-00126/000</div>
<div class="f" style="left:183.6px;top:411.82px;width:79.0px;font-size:8.66px;letter-spacing:-0.094px;">Opona sametova</div>
<div class="f" style="left:271px;top:411.82px;width:65.0px;font-size:8.66px;letter-spacing:-0.093px;">110</div>
<div class="f" style="left:336px;top:411.82px;width:78.0px;font-size:8.66px;letter-spacing:-0.093px;">050505050</div>
<div class="f" style="left:414px;top:411.82px;width:86.2px;font-size:8.66px;letter-spacing:-0.047px;">Zasedací místnost na</div>
<div class="f" style="left:500.2px;top:411.82px;width:99.8px;"></div>
<div class="f" style="left:600px;top:411.82px;width:85.6px;"></div>
<div class="f" style="left:685.6px;top:411.82px;width:50.0px;font-size:8.66px;letter-spacing:-0.083px;">03.09.2007</div>
<div class="f" style="left:735.6px;top:411.82px;width:56.7px;border-right:none;"></div>
<div class="f" style="left:72.4px;top:426.90px;width:11.0px;font-size:8.66px;letter-spacing:0.044px;padding-left:0.5px;">D</div>
<div class="f" style="left:83.4px;top:426.90px;width:100.2px;font-size:8.66px;letter-spacing:-0.059px;">05-01202/000</div>
<div class="f" style="left:183.6px;top:426.90px;width:79.0px;font-size:8.66px;letter-spacing:-0.099px;">Skrinka kovova</div>
<div class="f" style="left:271px;top:426.90px;width:65.0px;font-size:8.66px;letter-spacing:-0.093px;">150</div>
<div class="f" style="left:336px;top:426.90px;width:78.0px;font-size:8.66px;letter-spacing:-0.093px;">010300633</div>
<div class="f" style="left:414px;top:426.90px;width:86.2px;font-size:8.66px;letter-spacing:0.002px;">Kancelář č.633 (Náro</div>
<div class="f" style="left:500.2px;top:426.90px;width:99.8px;"></div>
<div class="f" style="left:600px;top:426.90px;width:85.6px;"></div>
<div class="f" style="left:685.6px;top:426.90px;width:50.0px;font-size:8.66px;letter-spacing:-0.083px;">01.01.1971</div>
<div class="f" style="left:735.6px;top:426.90px;width:56.7px;border-right:none;"></div>
<div class="f" style="left:72.4px;top:441.98px;width:11.0px;font-size:8.66px;letter-spacing:0.044px;padding-left:0.5px;">D</div>
<div class="f" style="left:83.4px;top:441.98px;width:100.2px;font-size:8.66px;letter-spacing:-0.059px;">05-01312/000</div>
<div class="f" style="left:183.6px;top:441.98px;width:79.0px;font-size:8.66px;letter-spacing:-0.090px;">Skrinka zav nlk 135</div>
<div class="f" style="left:271px;top:441.98px;width:65.0px;font-size:8.66px;letter-spacing:-0.093px;">150</div>
<div class="f" style="left:336px;top:441.98px;width:78.0px;font-size:8.66px;letter-spacing:-0.093px;">010300633</div>
<div class="f" style="left:414px;top:441.98px;width:86.2px;font-size:8.66px;letter-spacing:0.002px;">Kancelář č.633 (Náro</div>
<div class="f" style="left:500.2px;top:441.98px;width:99.8px;"></div>
<div class="f" style="left:600px;top:441.98px;width:85.6px;"></div>
<div class="f" style="left:685.6px;top:441.98px;width:50.0px;font-size:8.66px;letter-spacing:-0.083px;">01.01.1971</div>
<div class="f" style="left:735.6px;top:441.98px;width:56.7px;border-right:none;"></div>
<div class="f" style="left:72.4px;top:457.06px;width:11.0px;font-size:8.66px;letter-spacing:0.044px;padding-left:0.5px;">D</div>
<div class="f" style="left:83.4px;top:457.06px;width:100.2px;font-size:8.66px;letter-spacing:-0.059px;">06-01260/000</div>
<div class="f" style="left:183.6px;top:457.06px;width:79.0px;font-size:8.66px;letter-spacing:-0.126px;">Skrinka labor t 08</div>
<div class="f" style="left:271px;top:457.06px;width:65.0px;font-size:8.66px;letter-spacing:-0.093px;">150</div>
<div class="f" style="left:336px;top:457.06px;width:78.0px;font-size:8.66px;letter-spacing:-0.093px;">010300633</div>
<div class="f" style="left:414px;top:457.06px;width:86.2px;font-size:8.66px;letter-spacing:0.002px;">Kancelář č.633 (Náro</div>
<div class="f" style="left:500.2px;top:457.06px;width:99.8px;"></div>
<div class="f" style="left:600px;top:457.06px;width:85.6px;"></div>
<div class="f" style="left:685.6px;top:457.06px;width:50.0px;font-size:8.66px;letter-spacing:-0.083px;">01.01.1971</div>
<div class="f" style="left:735.6px;top:457.06px;width:56.7px;border-right:none;"></div>
<div class="f" style="left:72.4px;top:472.14px;width:11.0px;font-size:8.66px;letter-spacing:0.044px;padding-left:0.5px;">D</div>
<div class="f" style="left:83.4px;top:472.14px;width:100.2px;font-size:8.66px;letter-spacing:-0.059px;">06-02312/000</div>
<div class="f" style="left:183.6px;top:472.14px;width:79.0px;font-size:8.66px;letter-spacing:-0.105px;">Skrinka vrchni</div>
<div class="f" style="left:271px;top:472.14px;width:65.0px;font-size:8.66px;letter-spacing:-0.093px;">150</div>
<div class="f" style="left:336px;top:472.14px;width:78.0px;font-size:8.66px;letter-spacing:-0.093px;">010300633</div>
<div class="f" style="left:414px;top:472.14px;width:86.2px;font-size:8.66px;letter-spacing:0.002px;">Kancelář č.633 (Náro</div>
<div class="f" style="left:500.2px;top:472.14px;width:99.8px;"></div>
<div class="f" style="left:600px;top:472.14px;width:85.6px;"></div>
<div class="f" style="left:685.6px;top:472.14px;width:50.0px;font-size:8.66px;letter-spacing:-0.083px;">01.01.1978</div>
<div class="f" style="left:735.6px;top:472.14px;width:56.7px;border-right:none;"></div>
<div class="f" style="left:72.4px;top:487.22px;width:11.0px;font-size:8.66px;letter-spacing:-0.044px;padding-left:0.5px;">I</div>
<div class="f" style="left:83.4px;top:487.22px;width:100.2px;font-size:8.66px;letter-spacing:-0.059px;">07-00012/001</div>
<div class="f" style="left:183.6px;top:487.22px;width:79.0px;font-size:8.66px;letter-spacing:-0.099px;">LZICKA PT</div>
<div class="f" style="left:271px;top:487.22px;width:65.0px;font-size:8.66px;letter-spacing:-0.093px;">140</div>
<div class="f" style="left:336px;top:487.22px;width:78.0px;"></div>
<div class="f" style="left:414px;top:487.22px;width:86.2px;"></div>
<div class="f" style="left:500.2px;top:487.22px;width:99.8px;"></div>
<div class="f" style="left:600px;top:487.22px;width:85.6px;font-size:8.66px;letter-spacing:-0.003px;">9.70 G</div>
<div class="f" style="left:685.6px;top:487.22px;width:50.0px;font-size:8.66px;letter-spacing:-0.083px;">01.05.1970</div>
<div class="f" style="left:735.6px;top:487.22px;width:56.7px;border-right:none;"></div>
<div class="a nav"><i></i><b>Nav</b></div>
<div class="a vup"></div><div class="a vth"></div><div class="a vdn"></div>
<div class="a f cnt"></div><div class="a zl">záznamů</div>
<div class="a hsb"></div><div class="a hl"></div><div class="a hth"></div><div class="a hr"></div>
<svg class="a" style="left:0;top:0" width="800" height="581" viewBox="0 0 800 581"><path d="M46.4 87.6 L49.25 84 L52.1 87.6 Z" fill="#34507f"/><path d="M46 493 L51.8 493 L48.9 496.6 Z" fill="#34507f"/><path d="M279 526.4 L279 531.6 L275.6 529 Z" fill="#3d5a8c"/><path d="M784.2 526 L784.2 532 L788 529 Z" fill="#3d5a8c"/><circle cx="50.9" cy="116.8" r="0.9" fill="#fcfcfc"/><circle cx="47.2" cy="119.8" r="0.9" fill="#fcfcfc"/><circle cx="50.9" cy="122.8" r="0.9" fill="#fcfcfc"/><circle cx="47.2" cy="126.2" r="0.9" fill="#fcfcfc"/><circle cx="50.9" cy="129.4" r="0.9" fill="#fcfcfc"/><circle cx="47.2" cy="132.6" r="0.9" fill="#fcfcfc"/><circle cx="50.9" cy="135.8" r="0.9" fill="#fcfcfc"/><circle cx="330.0" cy="526.3" r="0.9" fill="#fcfcfc"/><circle cx="336.4" cy="526.3" r="0.9" fill="#fcfcfc"/><circle cx="343.0" cy="526.3" r="0.9" fill="#fcfcfc"/><circle cx="349.4" cy="526.3" r="0.9" fill="#fcfcfc"/><circle cx="355.6" cy="526.3" r="0.9" fill="#fcfcfc"/><circle cx="361.8" cy="526.3" r="0.9" fill="#fcfcfc"/><circle cx="326.4" cy="531" r="0.9" fill="#fcfcfc"/><circle cx="333.0" cy="531" r="0.9" fill="#fcfcfc"/><circle cx="339.2" cy="531" r="0.9" fill="#fcfcfc"/><circle cx="345.6" cy="531" r="0.9" fill="#fcfcfc"/><circle cx="352.0" cy="531" r="0.9" fill="#fcfcfc"/><circle cx="358.2" cy="531" r="0.9" fill="#fcfcfc"/><circle cx="364.4" cy="531" r="0.9" fill="#fcfcfc"/></svg>
<div class="a" style="left:82.4px;top:78.9px;width:100.7px;height:15.7px;box-sizing:border-box;border:2px solid #e8303a;border-radius:2.8px;box-shadow:inset 0 0 0 0.9px #e2f5fd"></div>
<svg class="a" style="left:770px;top:42px" width="28" height="14" viewBox="770 42 28 14"><path d="M776.4 47.2 V45.4 H782.4 V50 H780.4" fill="none" stroke="#e8e8ec" stroke-width="1"/><path d="M776.4 45.7 H782.4" stroke="#e8e8ec" stroke-width="1.4"/><rect x="774.5" y="47.6" width="5.6" height="4.6" fill="#22324f" stroke="#e8e8ec" stroke-width="1"/><path d="M774.5 48 H780.1" stroke="#e8e8ec" stroke-width="1.4"/><path d="M788 46.2 L794.6 52.6 M794.6 46.2 L788 52.6" stroke="#f4f4f4" stroke-width="1.3"/></svg>
<div class="a status"></div>
<div class="a" style="left:0;top:543px;width:798.9px;height:1.2px;background:#f6f6f6"></div><div class="a" style="left:0;top:544.2px;width:800px;height:1.3px;background:#262626"></div>
<div class="a" style="left:3.5px;top:547.4px;width:782.5px;height:13.4px;background:#62676f;border-radius:6px 0 0 0"></div>
<div class="a so"></div>
<div class="st" style="left:7.50px;top:548.8px;font-size:9.90px;transform:scaleX(0.9621);transform-origin:0 0;">Složené (vícenásobné) třídění / Uživatelské filty: Ctrl-S</div>
<div class="st" style="left:7.50px;top:562.9px;font-size:9.90px;transform:scaleX(0.9840);transform-origin:0 0;">Záznam: 1/152</div>
<div class="st" style="left:180.50px;top:562.9px;font-size:9.90px;transform:scaleX(0.7507);transform-origin:0 0;">...</div>
<div class="st" style="left:326.20px;top:562.9px;font-size:9.90px;transform:scaleX(0.9558);transform-origin:0 0;">&lt;OSC&gt;</div>
<div class="sl" style="left:8px;top:560.8px;width:783px;height:1px"></div>
<div class="sl" style="left:110.6px;top:563px;height:10px;width:1px"></div>
<div class="sl" style="left:133px;top:563px;height:10px;width:1px"></div>
<div class="sl" style="left:196px;top:563px;height:10px;width:1px"></div>
<div class="sl" style="left:276px;top:563px;height:10px;width:1px"></div>
<div class="sl" style="left:320px;top:563px;height:10px;width:1px"></div>
<div class="sl" style="left:785.6px;top:548px;height:13px;width:1px"></div>
</body></html>
